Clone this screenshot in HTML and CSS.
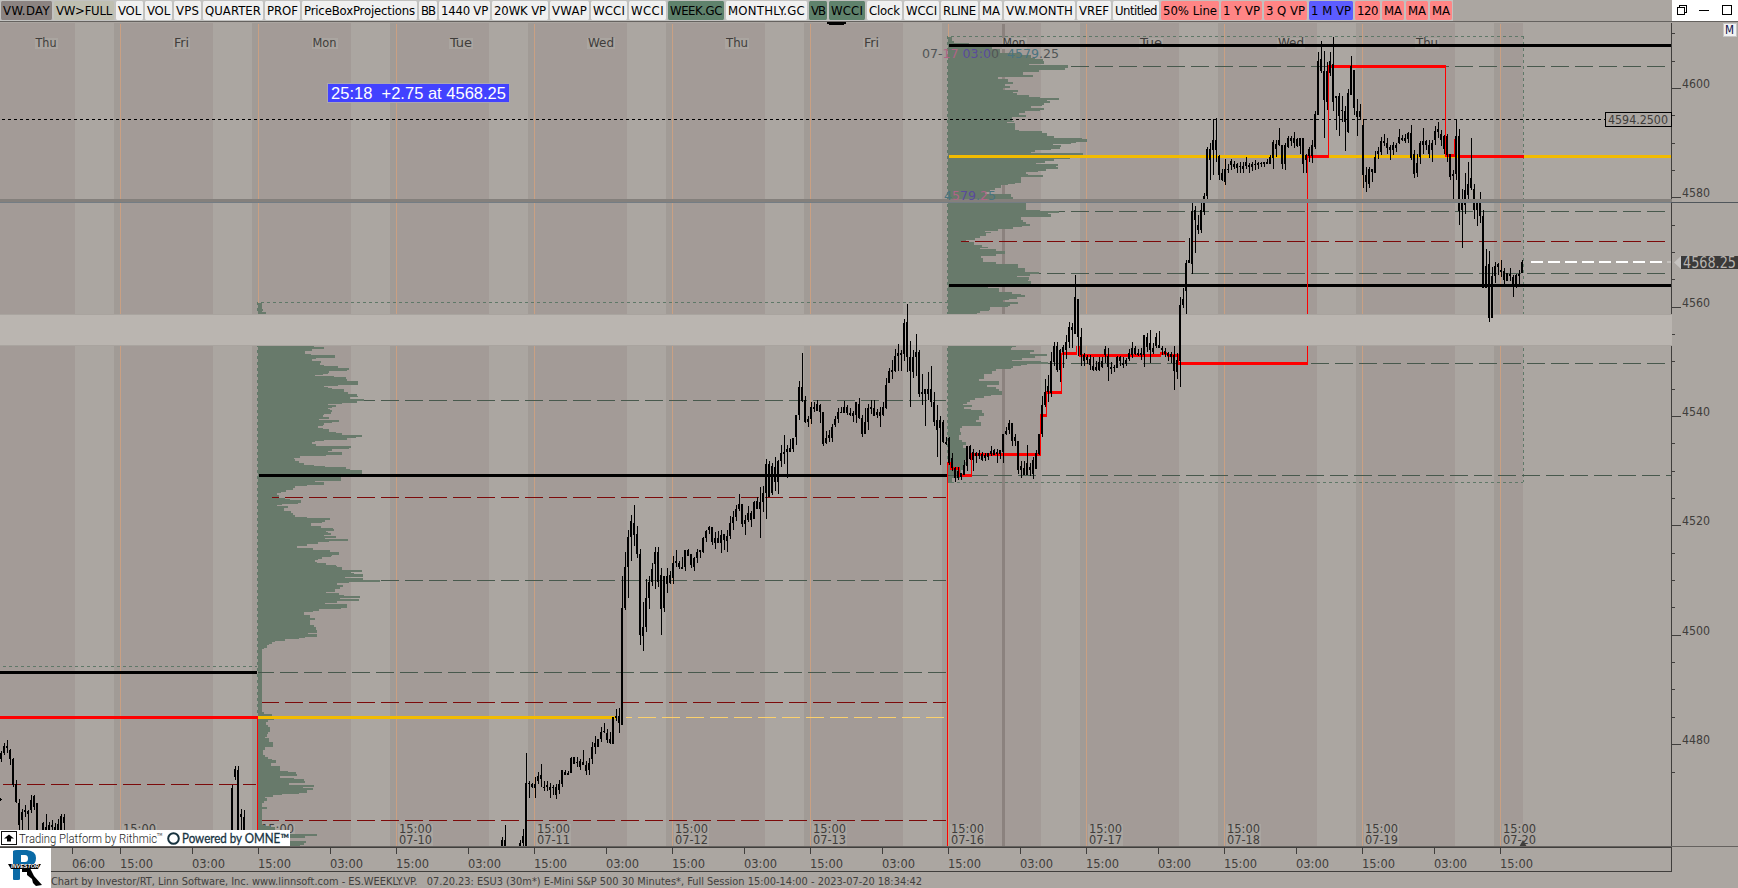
FILE: index.html
```html
<!DOCTYPE html>
<html lang="en">
<head>
<meta charset="utf-8">
<title>ES.WEEKLY.VP</title>
<link rel="stylesheet" href="styles.css">
</head>
<body>
<div class="app">
  <header class="toolbar">
    <div class="tabs" id="tabs"></div>
    <div class="window-controls">
      <svg width="66" height="21" viewBox="0 0 66 21" fill="none" stroke="#000">
        <path d="M5.500 7.500h7v7h-7zM7.500 7v-1.500h7v7h-2"/>
        <path d="M27 10.500h10"/>
        <path d="M50.500 5.500h9v9h-9z"/>
      </svg>
    </div>
  </header>
  <main class="chart">
    <svg id="chart" class="chart-canvas" width="1738" height="826" viewBox="0 22 1738 826"></svg>
  </main>
  <footer class="footer">
    <div class="brand">
      <svg width="51" height="40" viewBox="0 0 51 40">
        <path fill-rule="evenodd" d="M13 3Q14 2 17 2H27Q36 3 36 10Q36 16 31 18L20 21V31Q20 32 18 32H14Q13 32 13 31ZM21 7V14H25Q28 14 28 10.500Q28 7 25 7Z" fill="#0a6aa6"/>
        <path d="M22 20H30L34 28L42 37L36 38L33 35L32 31L27 27V24H22Z" fill="#000"/>
        <path d="M8 16H41L38 21H11Z" fill="#000"/>
        <text class="brand-name" x="11" y="20.200" textLength="28" lengthAdjust="spacingAndGlyphs">INVESTOR</text>
      </svg>
    </div>
    <div class="foot-rows">
      <svg id="time" class="time-axis" width="1687" height="24" viewBox="51 848 1687 24"></svg>
      <svg class="status" width="1687" height="16" viewBox="51 872 1687 16">
        <text x="51" y="885" textLength="871" lengthAdjust="spacingAndGlyphs" xml:space="preserve">Chart by Investor/RT, Linn Software, Inc. www.linnsoft.com - ES.WEEKLY.VP.   07.20.23: ESU3 (30m*) E-Mini S&amp;P 500 30 Minutes*, Full Session 15:00-14:00 - 2023-07-20 18:34:42</text>
      </svg>
    </div>
  </footer>
</div>
<script src="app.js"></script>
</body>
</html>
```
FILE: styles.css
```css
* { box-sizing: border-box; }
body {
  margin: 0;
  background: #aba6a1;
  font-family: "DejaVu Sans Condensed", "DejaVu Sans", sans-serif;
  overflow: hidden;
}
.app {
  width: 1738px;
  height: 888px;
  display: flex;
  flex-direction: column;
}
.toolbar {
  height: 22px;
  flex: none;
  display: flex;
  justify-content: space-between;
  border-bottom: 1px solid #65625f;
}
.tabs { display: flex; height: 21px; background: #c2c2c0; }
.tab {
  flex: none;
  height: 19px;
  margin-top: 1px;
  border: 1px solid #c2c2c0;
  border-width: 0 1px;
  border-radius: 2px;
  background: #f0f0f0;
  color: #000;
  font-size: 13px;
  line-height: 19px;
  text-align: center;
  white-space: nowrap;
  overflow: hidden;
}
.tab-text { display: block; }
.tab-day { background: #8b8381; }
.tab-full { background: #bfbfb1; }
.tab-green { background: #5f826c; }
.tab-red { background: #ff8585; }
.tab-blue { background: #5c5cff; }
.window-controls { width: 66px; height: 21px; background: #fff; }
.window-controls svg { display: block; shape-rendering: crispEdges; }
.chart, .chart-canvas { display: block; height: 826px; }
.chart-canvas text { font-size: 12px; fill: #403d3b; }
.chart-canvas .note { font-family: "Liberation Sans", sans-serif; font-size: 17px; fill: #fff; }
.chart-canvas .cursor-label { font-family: "DejaVu Sans", sans-serif; font-size: 12px; fill: #515556; stroke-width: .3; }
.cursor-label .pink { fill: #b06488; }
.cursor-label .violet { fill: #5a4a9c; }
.cursor-label .teal { fill: #4a7480; }
.chart-canvas .last { font-size: 15px; fill: #b8b4b0; }
.chart-canvas .m { fill: #10104a; font-size: 12px; }
.chart-canvas .rithmic { font-family: Roboto, "Liberation Sans", sans-serif; font-weight: 300; font-size: 13px; fill: #222; }
.chart-canvas .omne { font-family: Lato, sans-serif; font-size: 13px; fill: #17333f; stroke: #17333f; stroke-width: .3; }
.chart-canvas .tm { font-size: 4px; }
.chart-canvas rect, .time-axis rect { shape-rendering: crispEdges; }
.footer { display: flex; height: 40px; }
.brand { width: 51px; height: 40px; background: #fff; }
.brand svg { display: block; }
.brand-name { font-family: "Liberation Sans", sans-serif; font-size: 5px; font-weight: bold; font-style: italic; fill: #fff; }
.foot-rows { display: flex; flex-direction: column; }
.time-axis, .status { display: block; }
.time-axis text { font-size: 12px; fill: #403d3b; }
.status text { font-size: 11px; fill: #403d3b; }
```
FILE: app.js
```js
// Toolbar: [label, width, style]
const tabs = [
  ["VW.DAY",53,"day"],["VW>FULL",62,"full"],["VOL",29],["VOL",29],["VPS",29],["QUARTER",62],["PROF",37],
  ["PriceBoxProjections",117],["BB",20],["1440 VP",53],["20WK VP",58],["VWAP",41],["WCCI",38],["WCCI",39],
  ["WEEK.GC",58,"green"],["MONTHLY.GC",83],["VB",20,"green"],["WCCI",38,"green"],["Clock",37],["WCCI",37],
  ["RLINE",39],["MA",24],["VW.MONTH",73],["VREF",36],["Untitled",48],["50% Line",60,"red"],["1 Y VP",43,"red"],
  ["3 Q VP",45,"red"],["1 M VP",46,"blue"],["120",27,"red"],["MA",24,"red"],["MA",24,"red"],["MA",24,"red"]
];
const bar = document.getElementById("tabs");
for (const [label, width, kind] of tabs) {
  const t = document.createElement("div");
  t.className = "tab" + (kind ? " tab-" + kind : "");
  t.style.width = width + "px";
  const s = document.createElement("span");
  s.className = "tab-text";
  s.textContent = label;
  t.append(s);
  bar.append(t);
  const natural = (() => { const r = document.createRange(); r.selectNodeContents(s); return r.getBoundingClientRect().width; })();
  s.style.letterSpacing = ((width - 6 - natural) / label.length).toFixed(2) + "px";
}

const NS = "http://www.w3.org/2000/svg";
let root = document.getElementById("chart");
function el(name, attrs, text) {
  const e = document.createElementNS(NS, name);
  for (const k in attrs) e.setAttribute(k, attrs[k]);
  if (text !== undefined) e.textContent = text;
  root.append(e);
  return e;
}
const rect = (x, y, w, h, fill) => el("rect", { x, y, width: w, height: h, fill });
function label(x, y, w, text, cls, back) {
  if (back) rect(x - 1, y - 9, w + 2, 11, "#aaa5a0");
  const a = { x, y, textLength: w, lengthAdjust: "spacingAndGlyphs" };
  if (cls) a.class = cls;
  return el("text", a, text);
}
function dashes(x1, x2, y, phase, on, off, fill, h = 1) {
  const p = on + off;
  for (let x = phase + Math.floor((x1 - phase) / p) * p; x < x2; x += p) {
    const a = Math.max(x, x1), b = Math.min(x + on, x2);
    if (b > a) rect(a, y, b - a, h, fill);
  }
}
function vdashes(x, y1, y2, fill) { for (let y = y1; y < y2; y += 6) rect(x, y, 1, Math.min(3, y2 - y), fill); }

// Session shading, one day is 138px
rect(0, 23, 75, 824, "#a39b97");
for (let x = 120; x <= 1500; x += 138) {
  const end = Math.min(x + 93, 1523);
  rect(x - 6, 23, 6, 824, "#a19b96");
  rect(x, 23, end - x, 824, "#a39b97");
  rect(x, 24, 1, 823, "#c9a083");
}
rect(1002, 24, 3, 823, "#8b827e");

const days = [[35.500,21,"Thu"],[174,15,"Fri"],[312.500,24,"Mon"],[450,22,"Tue"],[588,26,"Wed"],[726,22,"Thu"],[864,15,"Fri"],[1002.500,23,"Mon"],[1140,22,"Tue"],[1278,26,"Wed"],[1416,22,"Thu"]];
for (const [x, w, t] of days) label(x, 47, w, t, "", true);
const dates = ["","","07-10","07-11","07-12","07-13","07-16","07-17","07-18","07-19","07-20"];
dates.forEach((d, i) => {
  const x = 123 + i * 138;
  label(x, 833, 33, "15:00", "", true);
  if (d) label(x, 844, 33, d, "", true);
});

// Volume profiles: [row start, right edge] in thirds of a pixel
const thirds = 3;
const profileA = [
  [240,290,72,[39,66,57,69,63,66,66,78]],
  [240,290,870,[168,222,171,252,177,216,183,195,192,213,195,285,204,228,207,216,213,243,219,240,225,252,228,294,234,327,240,321,243,267,249,264,252,249,255,225,258,282,261,318,267,321,273,354,285,294,288,252,291,264,294,276,297,312,306,324,312,351,318,354,321,330,327,372,333,351,339,306,342,264,345,288,351,276,354,264,357,270,360,276,366,273,372,252,375,249,381,267,387,237,390,297,396,276,399,252,405,249,408,234,414,249,417,267,426,288,429,306,435,366,441,348,444,321,450,252,453,225,456,216,462,228,468,333,474,327,477,276,483,264,486,306,495,258,498,180,504,162,507,165,513,177,519,192,525,222,528,255,531,318,537,330,540,366,561,303,573,225,576,252,585,201,588,165,594,159,600,138,606,123,609,111,615,117,624,135,627,150,630,183,639,174,642,126,645,111,648,144,654,132,663,153,669,159,675,165,681,201,684,270,690,255,696,246,699,213,708,243,714,279,717,282,723,258,726,264,729,273,735,252,738,288,744,255,747,324,753,267,756,234,762,201,768,171,774,219,780,270,786,297,795,276,798,273,801,246,807,234,810,225,816,231,819,258,825,288,828,291,831,306,840,366,846,333,849,342,852,369,861,315,864,369]],
  [240,580,798,[0,420,6,327,9,291,15,309,21,300,27,285,36,258,39,297,45,312,48,360,54,300,57,357,63,291,69,255,72,321,84,303,87,237,93,219,96,192,105,210,114,225,120,210,135,222,141,228,150,231,159,204,162,231,171,195,174,177,177,135,183,105,186,96,192,87,195,81,204,72,207,66,396,72,402,96,417,102,420,84,426,78,435,84,441,90,456,84,462,81,471,75,474,87,486,99,501,75,510,69,525,75,531,84,537,96,540,108,549,93,558,120,573,144,576,168,582,171,588,120,594,162,597,192,603,195,609,147,615,222,621,189,624,219,630,201,639,177,642,126,645,99,651,75,654,81,663,72,669,66,681,81,687,66,735,75,738,90,741,105,750,150,762,231,768,195,774,150,783,198,789,192,795,180]]
];
const profileB = [
  [920,20,756,[51,96,63,102,69,147,81,216,87,240,99,303,105,333,114,345,117,369,123,372,132,327,135,444,144,435,150,357,156,309,165,339,171,234,177,264,186,279,192,255,198,270,204,249,210,294,216,279,219,291,225,327,231,360,234,417,240,381,243,390,249,372,255,366,258,333,264,372,270,360,273,315,279,297,285,318,291,276,303,282,306,261,309,285,330,297,333,366,339,381,348,402,354,486,357,501,366,468,369,453,372,399,375,423,381,420,387,393,390,345,396,333,399,489,405,501,414,450,417,402,423,375,429,348,432,414,438,408,441,414,447,378,453,354,456,318,462,324,465,369,471,303,489,285,492,264,495,243,504,225,510,210,516,195,522,273,531,279,540,312,549,318,570,360,573,417,579,384,582,393,591,303,600,309,606,318,612,330,618,306,621,279,627,234,633,195,636,213,639,198,648,180,654,165,660,138,666,162,669,162,675,186,681,204,684,180,687,228,693,255,702,228,708,183,714,189,726,228,732,294,744,315]],
  [920,250,192,[66,357,72,330,78,291,81,327,90,324,93,333,111,204,114,237,126,276,132,303,135,315,141,291,147,267,150,249,156,294,162,270,168,264,171,210,180,207,183,180,189,171]],
  [920,250,699,[288,288,291,276,294,273,300,342,306,330,312,381,318,345,324,306,330,276,333,363,336,384,342,321,345,303,348,279,354,273,357,228,363,216,372,192,387,177,393,237,405,201,411,228,417,237,423,246,435,213,438,192,444,165,450,150,456,141,462,129,465,156,471,132,477,153,480,186,489,192,498,177,510,168,516,183,528,126,534,120,546,123,555,117,570,126,576,138,585,129,594,141,612,141,624,138,630,135,636,141,645,135,660,123,672,120,684,96]]
];
function profile(parts, left) {
  for (const [ox, oy, end, d] of parts) {
    for (let i = 0; i < d.length; i += 2) {
      const y1 = Math.round(oy + d[i] / thirds);
      const y2 = Math.round(oy + (i + 2 < d.length ? d[i + 2] : end) / thirds);
      rect(left, y1, Math.round(ox + d[i + 1] / thirds) - left, y2 - y1, "#687a6b");
    }
  }
}
profile(profileA, 258);
profile(profileB, 948);

// Profile frames
const frame = "#5f7868", green = "#48594d", maroon = "#7c0a0a";
dashes(3, 257, 666, 3, 3, 3, frame);
dashes(258, 947, 302, 3, 3, 3, frame);
vdashes(257, 302, 716, frame);
dashes(948, 1523, 36, 3, 3, 3, frame);
dashes(948, 1523, 482, 3, 3, 3, frame);
vdashes(947, 36, 462, frame);
vdashes(1523, 36, 482, frame);
// Volume nodes
dashes(364, 946, 400, 21, 18, 6, green);
dashes(381, 946, 580, 21, 18, 6, green);
dashes(258, 946, 672, 16, 18, 6, green);
dashes(272, 946, 497, 21, 18, 6, maroon);
dashes(262, 946, 702, 21, 18, 6, maroon);
dashes(262, 946, 820, 21, 18, 6, maroon);
dashes(3, 256, 784, 3, 18, 6, maroon);
dashes(626, 946, 717, 14, 18, 6, "#fbd06c");
dashes(1071, 1671, 66, 15, 18, 6, green);
dashes(1059, 1671, 211, 15, 18, 6, green);
dashes(961, 1671, 241, 15, 18, 6, maroon);
dashes(1039, 1671, 273, 15, 18, 6, green);
dashes(1048, 1671, 363, 15, 18, 6, green);
dashes(948, 1671, 475, 10, 18, 6, green);
dashes(2, 1605, 119, 2, 3, 3, "#000");

// Solid levels
rect(0, 671, 257, 3, "#000");
rect(259, 474, 688, 3, "#000");
rect(949, 44, 722, 3, "#000");
rect(949, 284, 722, 3, "#000");
rect(258, 716, 358, 3, "#f2bb00");
rect(949, 155, 722, 3, "#f2bb00");
const red = "#f00";
rect(0, 716, 258, 3, red);
rect(257, 718, 1, 129, red);
rect(947, 463, 1, 384, red);
[[947,951,463],[950,960,468],[959,972,475],[971,1041,454],[1040,1047,415],[1046,1062,392],[1062,1077,353],[1079,1161,355],[1160,1167,353],[1167,1179,355],[1178,1308,363],[1307,1329,156],[1328,1446,66],[1445,1456,155],[1458,1524,156]]
  .forEach(([a, b, y]) => rect(a, y - 1, b - a, 3, red));
[[950,463,469],[959,468,476],[971,454,476],[1040,415,455],[1046,392,416],[1061,353,393],[1076,344,354],[1079,344,356],[1178,355,364],[1307,156,364],[1328,66,157],[1445,66,156]]
  .forEach(([x, a, b]) => rect(x, a, 1, b - a, red));
rect(1454, 139, 3, 18, red);
rect(1671, 23, 1, 825, "#403e3c");

// Reference zone
rect(0, 314, 1672, 32, "#a9a49f");
rect(0, 315, 1672, 30, "#bab5b0");

// Bars: high, low, body top, body bottom in thirds of a pixel
const series = [
  [1,640,[332,365,340,356,309,345,318,340,300,340,318,323,327,375,330,358,354,440,358,435,420,488,433,485,478,570,488,555,507,570,515,540,495,530,510,515,510,570,513,522,465,520,480,510,465,510,468,500,488,570,490,570]],
  [43,640,[545,570,548,570,522,570,560,570,546,570,555,570,540,570,555,560,550,570,560,570,538,570,552,570,521,570,528,570,521,570,530,550]],
  [232,640,[435,570,445,570,378,420,388,412,378,570,390,570,507,570,522,530,510,570,530,570]],
  [502,580,[770,797,780,797,735,797,780,797]],
  [520,580,[780,797,788,797,747,797,768,790,518,797,610,797,603,654,608,613,608,625,612,622,590,654,612,625,575,612,588,603,552,622,585,598,603,633,620,623,603,633,615,620,610,654,620,630,615,645,620,624,612,657,622,645,601,642,612,630,570,620,570,612,570,585,575,584,572,585,578,585,531,580,534,578,531,552,531,552,531,562,545,550,537,570,542,560,510,555,546,555,543,585,555,572,535,585,550,570,486,552,500,537,468,522,490,500,477,500,477,500,441,486,455,478,429,460,452,456,447,489,459,480,456,492,477,488,410,492,412,492,387,422,409,414,384,459,409,430]],
  [622,290,[858,1305,954,1305,786,960,831,954,720,924,741,831,675,813,693,741,645,768,699,735,708,804,732,792,777,1065,792,1035,936,1083,1011,1038,867,1026,924,1011,858,957,876,924,819,888,837,876,771,897,786,822,771,891,786,876,834,1035,855,957,858,966,858,954,834,909,858,882,843,882,855,879,798,882,819,864,780,831,813,819,813,837,819,831,801,837,831,837,780,843,780,831,777,798,780,798,792,834,792,825,801,843,804,831,777,819,786,804,780,804,780,786,741,789,744,786,720,756,723,744,708,732,711,720,711,765,711,756,726,777,744,759,723,759,744,759,720,789,735,759,732,780,732,750,720,786,738,753,678,747,699,738,663,720,681,699,645,693,657,681,612,663,642,657,642,711,642,702,675,735,690,702,648,696,669,690,663,711,669,690,633,687,636,687,621,657,633,657,591,744,636,657,588,666,609,636,507,687,522,609,513,621,522,621,519,615,528,609,501,603,531,576,510,612,513,576,465,531,489,513,435,522,486,492,465,564,477,486,447,486,474,486,444,486,444,477,375,465,375,441,273,390,291,375,189,336,291,333,318,399,330,396,378,411,387,396,336,402,351,387,336,366,351,357,330,363,342,363,342,399,345,366,366,468,366,462,423,462,444,459,420,456,435,444,402,456,411,444,378,411,387,405,354,399,366,387,351,369,366,369,333,369,351,369,345,375,351,369,354,378,369,375,363,396,369,378,336,399,336,375,324,387,342,384,375,441,384,432,354,432,396,432,342,420,354,396,330,372,351,357,330,378,354,378,357,384,366,375,351,411,366,378,336,378,351,375,264,357,285,354,234,279,243,279,210,267,240,246,177,246,198,243,162,243,189,198,180,243,189,195,87,213,99,192,42,246,96,201,153,351,201,243,180,264,201,246,132,258,186,201,180,321,186,312,252,345,306,312,297,408,297,312,246,330,297,312,228,351,297,336,306,408,336,396,345,501,390,420,378,525,390,414,390,459,396,456,441,465,456,462]],
  [949,250,[561,645,563,640,609,663,623,655,651,696,654,684,651,690,663,684,669,690,669,680,630,675,645,675,588,663,588,648,585,630,588,627,597,663,606,630,606,639,609,618,600,627,609,618,606,633,612,630,609,633,615,624,609,630,609,621,588,618,603,612,597,612,600,615,597,639,606,612,600,627,600,612,552,639,552,606,531,555,543,552,510,552,519,540,519,588,519,573,552,588,561,573,573,672,573,660,633,684,648,660,633,675,654,675,585,675,639,675,639,678,651,660,621,687,630,672,600,657,609,657,552,615,552,612,438,560,465,552,387,471,426,465,375,456,408,426,306,441,333,429,276,348,288,336,276,366,288,360,297,396,300,360,285,354,291,306,255,327,276,300,216,294,231,276,219,294,231,240,75,252,141,252,147,318,147,261,234,348,261,315,309,348,315,333,315,342,321,330,315,360,327,345,321,363,348,360,333,363,351,360,321,363,336,360,321,354,333,351,288,339,297,315,294,393,318,351,336,372,351,357,345,366,351,354,318,354,321,354,318,348,321,333,321,354,339,345,324,348,330,342,297,333,309,327,276,324,294,315,288,315,294,312,297,318,309,315,294,330,309,315,255,351,255,315,249,306,261,291,240,339,279,300,279,312,294,306,249,294,261,288,243,294,285,294,288,315,294,300,294,321,303,312,306,333,309,318,306,339,312,321,288,420,315,363,309,387,330,366,141,411,165,333,114,174,147,165,30,192,39,123]],
  [1189,20,[654,729,720,729,540,762,573,732,558,699,570,600,585,642,615,630,540,639,570,630,519,585,528,576,381,540,387,528,369,480,387,420,297,465,360,390,294,426,360,390,405,480,408,465,447,483,459,480,417,495,447,486,432,459,447,450,417,450,423,435,423,447,432,441,429,459,432,444,426,459,438,441,426,459,438,447,411,447,426,438,429,459,435,441,426,453,432,441,420,450,432,435,426,447,429,435,426,441,429,432,426,441,426,432,417,432,426,432,405,432,411,432,360,447,366,414,360,411,372,387,324,378,360,375,375,447,375,432,369,450,375,432,348,384,354,381,348,378,354,363,336,384,354,369,354,381,357,378,354,402,354,378,354,459,354,432,402,459,405,420,381,426,387,408,360,429,375,408,273,387,282,381,96,285,123,285,63,159,117,153,93,354,153,240,126,270,153,246,96,168,123,159,51,273,132,246]],
  [1336,20,[228,330,228,234,219,348,228,288,228,306,270,273,258,393,273,306,207,339,219,336,108,225,138,225,150,285,150,264,237,348,273,291,252,300,273,291,297,504,315,465,441,516,465,486,441,504,447,492,447,486,447,456,393,459,411,459,381,417,393,402,351,405,363,396,342,378,363,369,354,402,369,384,375,420,381,390,366,405,375,390,369,396,375,384,327,372,351,369,345,363,354,360,342,369,354,363,336,369,339,357,315,420,339,414,390,474,402,462,402,471,429,459,363,432,369,411,324,402,363,375,360,390,363,375,360,414,375,402,360,426,369,390,318,375,333,360,306,354,327,336,330,378,342,360,345,402,348,387,342,426,348,405,402,480,402,471,450,543,462,468,297,480,348,462,327,615,348,573,507,684,540,570,459,582,510,555,426,537,492,525,354,510,474,504,492,597,507,570,540,618,546,570,516,609,540,588,570,804,588,804,687,804,738,804,693,906,732,894,741,894,768,894,726,789,738,768,729,765,732,741,720,771,750,756,744,795,753,780,759,783,759,783,744,783,762,768,765,831,771,795,762,804,765,792,750,795,762,768,720,759,726,759]]
];
for (const [x0, y0, d] of series) {
  let x = x0;
  for (let i = 0; i < d.length; i += 4, x += 3) {
    const [h, l, t, b] = d.slice(i, i + 4).map(v => Math.round(y0 + v / thirds));
    rect(x, h, 1, l - h, "#000");
    rect(x - 1, t, 2, Math.max(1, b - t), "#000");
  }
}
rect(0, 798, 1, 3, "#000");
rect(1, 799, 1, 1, "#000");
rect(827, 22, 19, 2, "#000");
rect(829, 24, 15, 1, "#000");

// Cursor
rect(0, 199, 1672, 3, "#84807c");
rect(0, 202, 1672, 1, "#747d84");
rect(1671, 202, 67, 1, "#50565b");
function cursorLabel(x, y, w, runs) {
  const t = label(x, y, w, "", "cursor-label");
  t.setAttribute("xml:space", "preserve");
  for (const [text, tone] of runs) {
    const s = document.createElementNS(NS, "tspan");
    if (tone) s.setAttribute("class", tone);
    s.textContent = text;
    t.append(s);
  }
}
cursorLabel(922, 58, 137, [["07-"], ["17", "pink"], ["\u00a003:0", "violet"], ["0\u00a0\u00a0"], ["4579", "teal"], [".25"]]);
cursorLabel(944, 200, 52, [["4", "teal"], ["5", "pink"], ["79", "violet"], [".", "teal"], ["2", "pink"], ["5", "teal"]]);

// Countdown note
rect(327, 83, 183, 20, "#aaa6b4");
rect(328, 84, 181, 18, "#4242ff");
el("text", { x: 331, y: 99, textLength: 175, lengthAdjust: "spacingAndGlyphs", class: "note", "xml:space": "preserve" }, "25:18\u00a0 +2.75 at 4568.25");

// Price axis
for (let i = -2; i < 26; i++) {
  const y = Math.round(88 + i * 27.340);
  if (i % 4 === 0) {
    rect(1672, y, 9, 1, "#403e3c");
    label(1682, y, 28, String(4600 - i * 5), "");
  } else if (y > 24) rect(1672, y, 3, 1, "#403e3c");
}
rect(1605, 112, 67, 15, "#000");
rect(1606, 113, 65, 13, "#aba6a1");
label(1608, 124, 60, "4594.2500", "");
dashes(1531, 1665, 261, 1531, 12, 5, "#fff", 2);
rect(1667, 261, 4, 2, "#c4c0bc");
el("path", { d: "M1674 262.500L1681 256V269Z", fill: "#c6c3c0" });
rect(1681, 256, 57, 13, "#3b3a39");
label(1683, 268, 53, "4568.25", "last");
rect(1723, 23, 14, 14, "#c5c5c5");
rect(1724, 24, 12, 12, "#f2f2f2");
label(1725, 34, 9, "M", "m");

// Plot bottom and provider strip
el("path", { d: "M1523 840L1527 847H1519Z", fill: "#403e3c" });
rect(0, 846, 1738, 1, "#65625f");
rect(0, 847, 1672, 1, "#403e3c");
rect(0, 830, 290, 16, "#fff");
el("rect", { x: 1.500, y: 831.500, width: 15, height: 13, fill: "#fff", stroke: "#111" });
el("path", { d: "M9 834.500L14 838.500H11V841.500H7V838.500H4Z", fill: "#000" });
label(19, 843, 138, "Trading Platform by Rithmic", "rithmic");
el("text", { x: 157, y: 836, class: "tm" }, "TM");
el("circle", { cx: 173.500, cy: 838.500, r: 5.300, fill: "none", stroke: "#17333f", "stroke-width": 2 });
label(182, 843, 107, "Powered by OMNE™", "omne");

// Time axis
root = document.getElementById("time");
rect(51, 871, 1621, 1, "#403e3c");
rect(1671, 848, 1, 24, "#403e3c");
const times = [[72, "06:00"], [120, "15:00"]];
for (let x = 192; x < 1500; x += 138) times.push([x, "03:00"], [x + 66, "15:00"]);
for (const [x, t] of times) {
  rect(x, 848, 1, 6, "#403e3c");
  label(x, 868, 33, t, "");
}
```
